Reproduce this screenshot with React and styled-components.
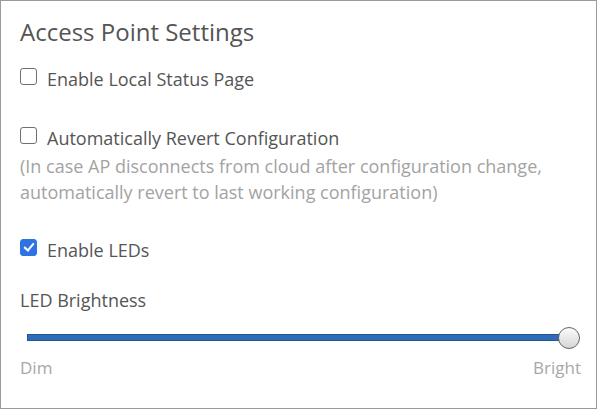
import React, { useState } from 'react';
import styled, { createGlobalStyle } from 'styled-components';

const GlobalStyle = createGlobalStyle`
  html, body {
    margin: 0;
    padding: 0;
    background: #fff;
  }
  body {
    font-family: "Open Sans", "Noto Sans", sans-serif;
  }
`;

const Panel = styled.div`
  box-sizing: border-box;
  width: 597px;
  height: 409px;
  border: 1px solid #9a9a9a;
  padding: 14px 15px 0 19px;
  color: #555;
`;

const Title = styled.h2`
  margin: 0 0 17px;
  font-size: 24px;
  font-weight: 400;
  line-height: 34px;
  color: #555;
`;

const CheckRow = styled.label`
  display: flex;
  align-items: center;
  gap: 10px;
  font-size: 18px;
  line-height: 26px;
  color: #555;
  cursor: pointer;
`;

const Box = styled.input.attrs({ type: 'checkbox' })`
  appearance: none;
  -webkit-appearance: none;
  position: relative;
  flex: none;
  box-sizing: border-box;
  width: 17px;
  height: 17px;
  margin: 0 0 5px;
  border: 1.5px solid #707070;
  border-radius: 3px;
  background: #fff;
  cursor: pointer;

  &:checked {
    background: #2f72e4;
    border-color: #2f72e4;
  }

  &:checked::after {
    content: '';
    position: absolute;
    left: 4.5px;
    top: 1px;
    width: 4px;
    height: 8px;
    border: solid #fff;
    border-width: 0 2.5px 2.5px 0;
    transform: rotate(40deg);
  }
`;

const Option = styled.div`
  margin-bottom: ${(p) => p.$gap}px;
`;

const Hint = styled.p`
  margin: 2px 0 0;
  font-size: 18px;
  line-height: 26px;
  color: #a3a3a3;
`;

const FieldLabel = styled.div`
  font-size: 18px;
  line-height: 26px;
  color: #555;
  margin-bottom: 14px;
`;

const SliderWrap = styled.div`
  position: relative;
  height: 22px;
  margin: 0 12px 0 7px;
`;

const Track = styled.div`
  position: absolute;
  left: 0;
  right: 0;
  top: 7px;
  height: 7px;
  box-sizing: border-box;
  background: #2e6cb8;
  border: 1px solid #24558f;
`;

const Thumb = styled.div`
  position: absolute;
  top: 0;
  width: 22px;
  height: 22px;
  box-sizing: border-box;
  border-radius: 50%;
  border: 1px solid #666;
  background: linear-gradient(#fbfbfb, #d6d6d6);
  transform: translateX(-50%);
`;

const Scale = styled.div`
  display: flex;
  justify-content: space-between;
  font-size: 17px;
  line-height: 24px;
  color: #a8a8a8;
  margin-top: 7px;
`;

export default function App() {
  const [local, setLocal] = useState(false);
  const [revert, setRevert] = useState(false);
  const [leds, setLeds] = useState(true);
  const value = 100;

  return (
    <>
      <GlobalStyle />
      <Panel>
        <Title>Access Point Settings</Title>
        <Option $gap={33}>
          <CheckRow>
            <Box checked={local} onChange={() => setLocal(!local)} />
            Enable Local Status Page
          </CheckRow>
        </Option>
        <Option $gap={32}>
          <CheckRow>
            <Box checked={revert} onChange={() => setRevert(!revert)} />
            Automatically Revert Configuration
          </CheckRow>
          <Hint>
            (In case AP disconnects from cloud after configuration change,
            automatically revert to last working configuration)
          </Hint>
        </Option>
        <Option $gap={24}>
          <CheckRow>
            <Box checked={leds} onChange={() => setLeds(!leds)} />
            Enable LEDs
          </CheckRow>
        </Option>
        <FieldLabel>LED Brightness</FieldLabel>
        <SliderWrap>
          <Track />
          <Thumb style={{ left: `${value}%` }} />
        </SliderWrap>
        <Scale>
          <span>Dim</span>
          <span>Bright</span>
        </Scale>
      </Panel>
    </>
  );
}
